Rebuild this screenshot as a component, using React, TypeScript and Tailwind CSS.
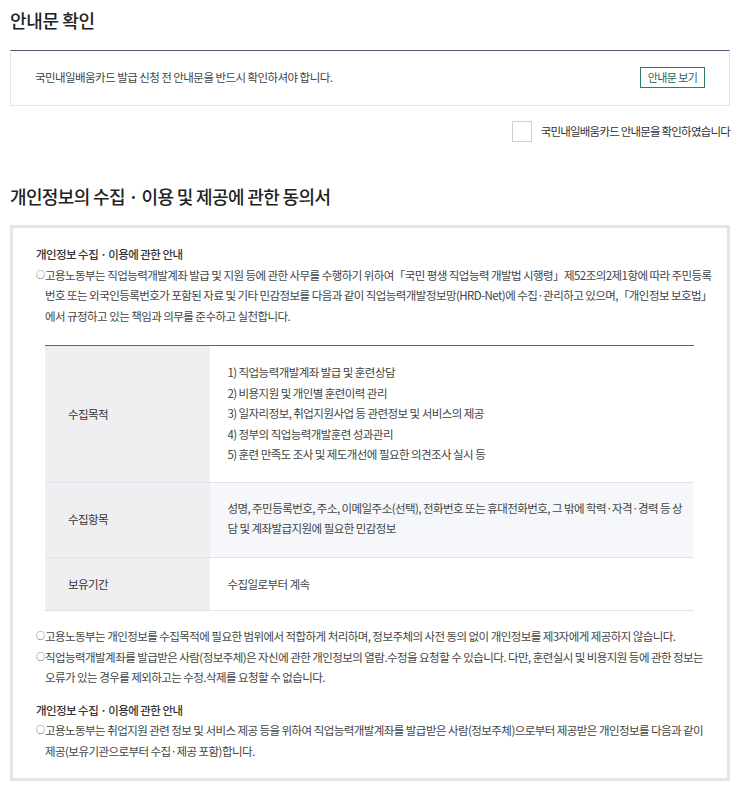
import React from 'react';

const FONT = "font-['Noto_Sans_CJK_KR','Noto_Sans',sans-serif]";

const Lines = ({ lines }: { lines: string[] }) => (
  <>
    {lines.map(l => (
      <div key={l} className="h-[20.5px] leading-[20.5px] whitespace-nowrap">
        {l}
      </div>
    ))}
  </>
);

const Bullet = ({ lines }: { lines: string[] }) => (
  <div className="flex">
    <span className="w-[9px] shrink-0 text-[9px] leading-[20.5px] h-[20.5px]">○</span>
    <div>
      <Lines lines={lines} />
    </div>
  </div>
);

const purposes = [
  '1) 직업능력개발계좌 발급 및 훈련상담',
  '2) 비용지원 및 개인별 훈련이력 관리',
  '3) 일자리정보, 취업지원사업 등 관련정보 및 서비스의 제공',
  '4) 정부의 직업능력개발훈련 성과관리',
  '5) 훈련 만족도 조사 및 제도개선에 필요한 의견조사 실시 등',
];

const App = () => {
  return (
    <div className={`${FONT} bg-white text-[#333] px-[10px] pt-[7px] pb-[8px] w-[745px] tracking-[-0.035em]`}>
      <h2 className="text-[18px] leading-[26px] font-medium text-[#222] tracking-[-0.02em]">안내문 확인</h2>

      <div className="mt-[17px] w-[720px] h-[56px] border border-[#e3e3e3] border-t-[#4f5a7e] flex items-center justify-between pl-[24px] pr-[24px]">
        <p className="text-[11.5px] text-[#444]">국민내일배움카드 발급 신청 전 안내문을 반드시 확인하셔야 합니다.</p>
        <button className="w-[65px] h-[21px] border border-[#2b7d73] text-[11px] text-[#2b5f5a] mt-[-2px]">안내문 보기</button>
      </div>

      <label className="mt-[15px] flex items-center justify-end w-[720px] gap-[9px]">
        <span className="w-[20px] h-[21px] border border-[#cfcfcf] bg-white" />
        <span className="text-[11.5px] text-[#333] tracking-[-0.07em]">국민내일배움카드 안내문을 확인하였습니다</span>
      </label>

      <h2 className="mt-[41px] text-[18px] leading-[26px] font-medium text-[#222] tracking-[-0.035em]">개인정보의 수집 · 이용 및 제공에 관한 동의서</h2>

      <div className="mt-[16px] w-[720px] border-[3px] border-[#e4e4ea] pl-[23px] pr-[33px] pt-[16px] pb-[17px] text-[11.5px] text-[#444]">
        <p className="text-[#333] font-medium h-[20.5px] leading-[20.5px]">개인정보 수집 · 이용에 관한 안내</p>
        <Bullet
          lines={[
            '고용노동부는 직업능력개발계좌 발급 및 지원 등에 관한 사무를 수행하기 위하여「국민 평생 직업능력 개발법 시행령」제52조의2제1항에 따라 주민등록',
            '번호 또는 외국인등록번호가 포함된 자료 및 기타 민감정보를 다음과 같이 직업능력개발정보망(HRD-Net)에 수집·관리하고 있으며,「개인정보 보호법」',
            '에서 규정하고 있는 책임과 의무를 준수하고 실천합니다.',
          ]}
        />

        <table className="ml-[9px] mt-[19px] w-[649px] border-t border-[#666] border-collapse leading-[20.5px]">
          <tbody>
            <tr className="border-b border-[#e2e2e8]">
              <th className="w-[170px] bg-[#efeff1] text-left font-normal text-[#333] pl-[23px] align-middle">수집목적</th>
              <td className="pl-[17px] pt-[16px] pb-[17px]">
                <Lines lines={purposes} />
              </td>
            </tr>
            <tr className="border-b border-[#e2e2e8]">
              <th className="bg-[#efeff1] text-left font-normal text-[#333] pl-[23px] align-middle">수집항목</th>
              <td className="bg-[#f5f7fb] pl-[17px] pr-[12px] pt-[15px] pb-[18px]">
                <Lines
                  lines={[
                    '성명, 주민등록번호, 주소, 이메일주소(선택), 전화번호 또는 휴대전화번호, 그 밖에 학력·자격·경력 등 상',
                    '담 및 계좌발급지원에 필요한 민감정보',
                  ]}
                />
              </td>
            </tr>
            <tr className="border-b border-[#e2e2e8]">
              <th className="bg-[#efeff1] text-left font-normal text-[#333] pl-[23px] align-middle">보유기간</th>
              <td className="pl-[17px] py-[16px]">
                <Lines lines={['수집일로부터 계속']} />
              </td>
            </tr>
          </tbody>
        </table>

        <div className="mt-[15px]">
          <Bullet lines={['고용노동부는 개인정보를 수집목적에 필요한 범위에서 적합하게 처리하며, 정보주체의 사전 동의 없이 개인정보를 제3자에게 제공하지 않습니다.']} />
          <Bullet
            lines={[
              '직업능력개발계좌를 발급받은 사람(정보주체)은 자신에 관한 개인정보의 열람.수정을 요청할 수 있습니다. 다만, 훈련실시 및 비용지원 등에 관한 정보는',
              '오류가 있는 경우를 제외하고는 수정.삭제를 요청할 수 없습니다.',
            ]}
          />
        </div>

        <p className="mt-[12px] text-[#333] font-medium h-[20.5px] leading-[20.5px]">개인정보 수집 · 이용에 관한 안내</p>
        <Bullet
          lines={[
            '고용노동부는 취업지원 관련 정보 및 서비스 제공 등을 위하여 직업능력개발계좌를 발급받은 사람(정보주체)으로부터 제공받은 개인정보를 다음과 같이',
            '제공(보유기관으로부터 수집·제공 포함)합니다.',
          ]}
        />
      </div>
    </div>
  );
};

export default App;
